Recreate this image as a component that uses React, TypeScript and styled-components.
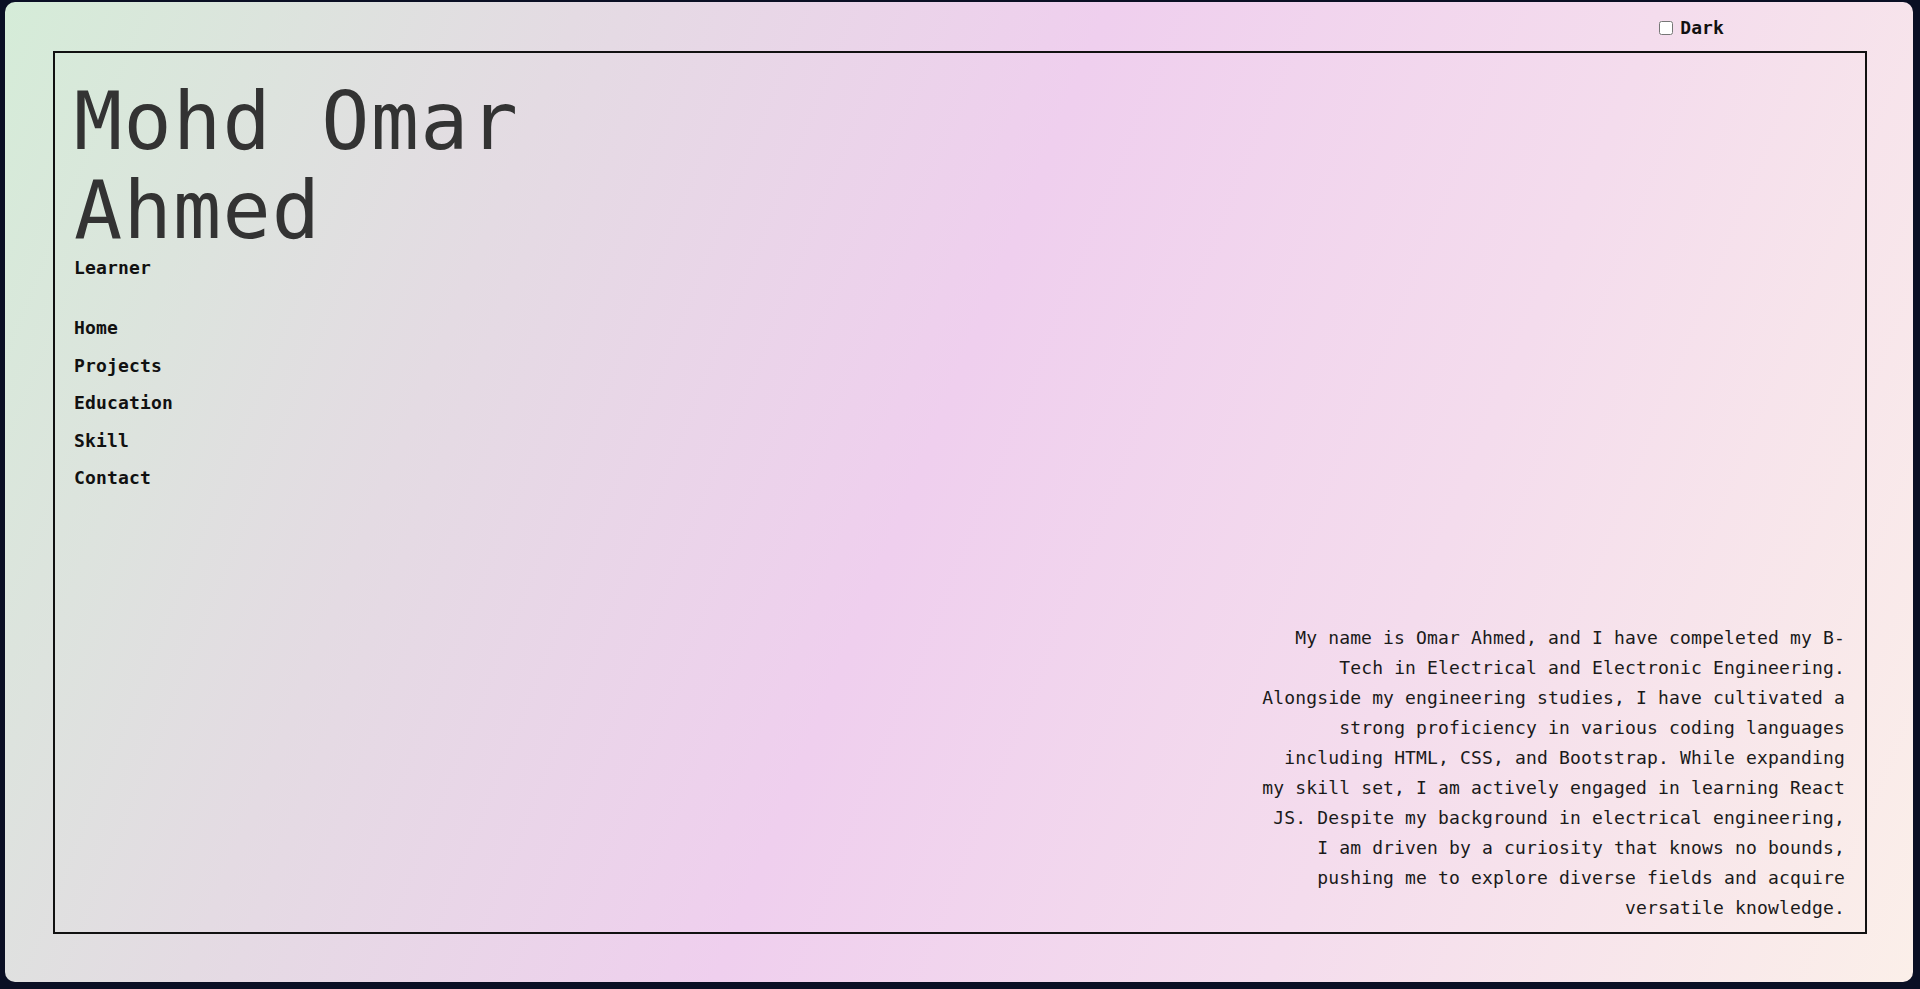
import React from "react";
import styled, { createGlobalStyle } from "styled-components";

const GlobalStyle = createGlobalStyle`
  html, body {
    margin: 0;
    padding: 0;
    background: #0a0f24;
  }
  body {
    font-family: "DejaVu Sans Mono", "Liberation Mono", monospace;
  }
  * { box-sizing: border-box; }
`;

const Screen = styled.div`
  width: 1920px;
  height: 989px;
  padding: 2px 7px 7px 5px;
  background: #0a0f24;
`;

const Card = styled.main`
  width: 1908px;
  height: 980px;
  border-radius: 10px;
  background: linear-gradient(112deg, #d5ecd8 0%, #e4dbe3 25%, #efcfee 48%, #f4dced 72%, #fbefe9 100%);
  display: flex;
  flex-direction: column;
`;

const TopBar = styled.header`
  height: 49px;
  display: flex;
  align-items: center;
  justify-content: flex-end;
  padding: 2px 189px 0 0;
`;

const Toggle = styled.label`
  display: flex;
  align-items: center;
  gap: 7px;
  font-size: 18px;
  font-weight: bold;
  color: #111;
  letter-spacing: 0.1px;
  cursor: pointer;
`;

const Check = styled.input`
  margin: 0;
  width: 14px;
  height: 14px;
`;

const Frame = styled.section`
  flex: 1;
  margin: 0 46px 48px 48px;
  border: 2px solid #111;
  padding: 0 20px 9px 19px;
  display: flex;
  flex-direction: column;
`;

const Name = styled.h1`
  margin: 24px 0 0;
  font-size: 80px;
  line-height: 89px;
  font-weight: normal;
  letter-spacing: 1.3px;
  color: #333;
  width: 500px;
`;

const Role = styled.div`
  margin-top: 1px;
  font-size: 18px;
  line-height: 24px;
  font-weight: bold;
  color: #111;
  letter-spacing: 0.16px;
`;

const Nav = styled.nav`
  margin-top: 29px;
  display: flex;
  flex-direction: column;
`;

const NavLink = styled.a`
  font-size: 18px;
  line-height: 37.5px;
  font-weight: bold;
  color: #111;
  text-decoration: none;
  letter-spacing: 0.16px;
`;

const About = styled.p`
  margin: auto 0 0;
  align-self: flex-end;
  width: 590px;
  text-align: right;
  font-size: 18px;
  line-height: 30px;
  letter-spacing: 0.16px;
  color: #1a1a1a;
`;

const links = ["Home", "Projects", "Education", "Skill", "Contact"];

export default function App() {
  return (
    <>
      <GlobalStyle />
      <Screen>
        <Card>
          <TopBar>
            <Toggle>
              <Check type="checkbox" />
              Dark
            </Toggle>
          </TopBar>
          <Frame>
            <Name>Mohd Omar Ahmed</Name>
            <Role>Learner</Role>
            <Nav>
              {links.map((l) => (
                <NavLink key={l} href="#">
                  {l}
                </NavLink>
              ))}
            </Nav>
            <About>
              My name is Omar Ahmed, and I have compeleted my B-Tech in Electrical and Electronic
              Engineering. Alongside my engineering studies, I have cultivated a strong proficiency in
              various coding languages including HTML, CSS, and Bootstrap. While expanding my skill
              set, I am actively engaged in learning React JS. Despite my background in electrical
              engineering, I am driven by a curiosity that knows no bounds, pushing me to explore
              diverse fields and acquire versatile knowledge.
            </About>
          </Frame>
        </Card>
      </Screen>
    </>
  );
}
